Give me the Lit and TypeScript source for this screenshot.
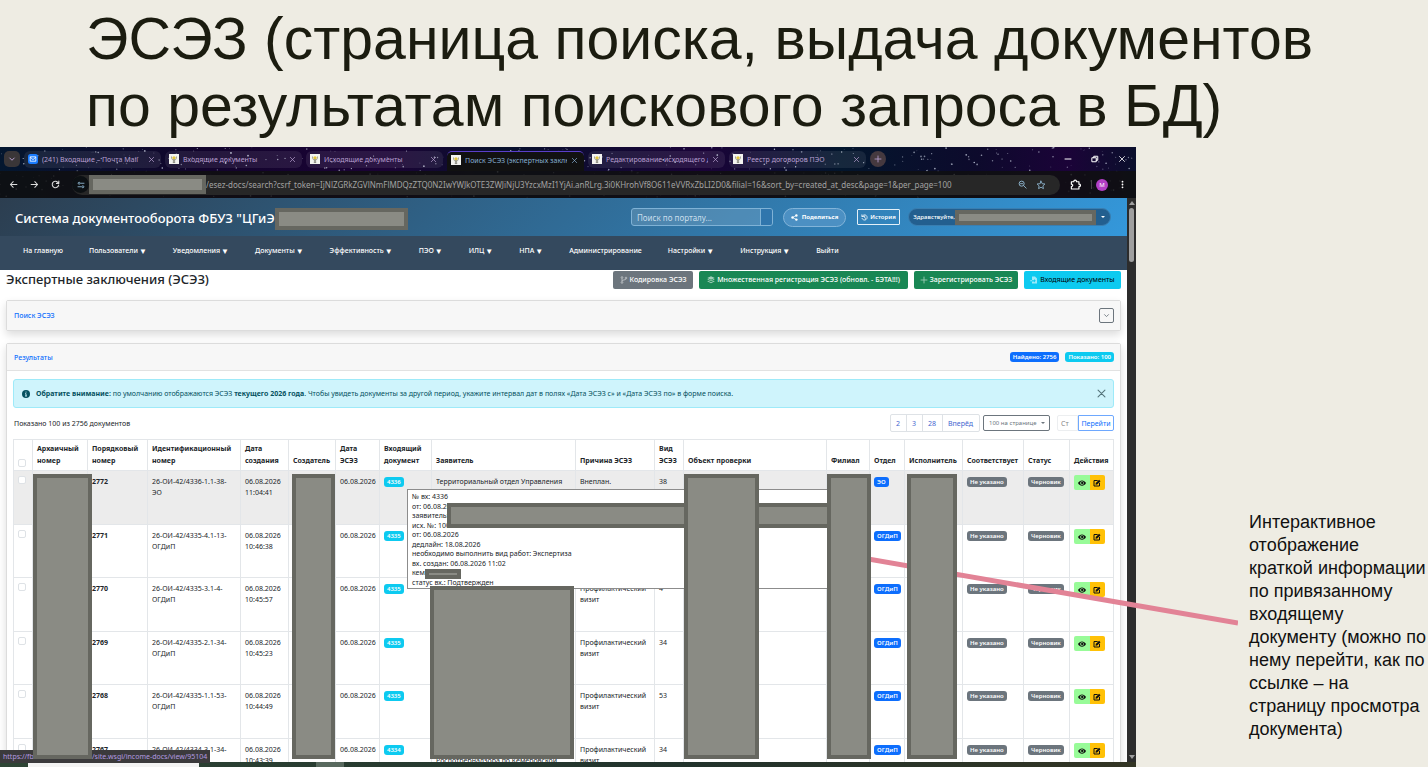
import { LitElement, html, svg, css, nothing, type TemplateResult } from "lit";
import { customElement } from "lit/decorators.js";

const icon = (size: number, body: TemplateResult, box = 16) =>
  html`<svg class="icon" width=${size} height=${size} viewBox="0 0 ${box} ${box}" aria-hidden="true">${body}</svg>`;

const line = (d: string, w = 1.6) =>
  svg`<path d=${d} fill="none" stroke="currentColor" stroke-width=${w} stroke-linecap="round" stroke-linejoin="round"/>`;

const icons = {
  chevron: svg`${line("M3.5 6l4.5 4.5L12.5 6", 2)}`,
  close: svg`${line("M3 3l10 10M13 3L3 13", 1.6)}`,
  plus: svg`${line("M8 2v12M2 8h12", 1.7)}`,
  minus: svg`${line("M2 8h12", 2)}`,
  restore: svg`${line("M2.5 5.5h8v8h-8zM5.5 5.5v-3h8v8h-3", 2)}`,
  back: svg`${line("M14 8H2.500M7.500 3L2.500 8l5 5", 1.8)}`,
  forward: svg`${line("M2 8h11.500M8.500 3l5 5-5 5", 1.8)}`,
  reload: svg`${line("M13.500 9A5.700 5.700 0 1 1 12 4L13.800 6M13.900 1.800V6H9.700", 1.9)}`,
  tune: svg`${line("M8 4.500h6M2 11.500h6", 1.8)}<circle cx="4.300" cy="4.500" r="2" fill="none" stroke="currentColor" stroke-width="1.800"/><circle cx="11.700" cy="11.500" r="2" fill="none" stroke="currentColor" stroke-width="1.800"/>`,
  zoomOut: svg`<circle cx="6.500" cy="6.500" r="4.500" fill="none" stroke="currentColor" stroke-width="1.700"/>${line("M10 10l4.500 4.500M4.500 6.500h4", 1.6)}`,
  star: svg`${line("M8 1.800l1.900 4.100 4.400.500-3.300 3 .900 4.400L8 11.600l-3.900 2.200.900-4.400-3.300-3 4.400-.500z", 1.4)}`,
  puzzle: svg`${line("M2 4h3.500c0-3 4-3 4 0H13v3.500c3 0 3 3.500 0 3.500v3.500H2V11c2.500 0 2.500-3.500 0-3.500z", 1.7)}`,
  dots: svg`<g fill="currentColor"><circle cx="8" cy="3" r="1.600"/><circle cx="8" cy="8" r="1.600"/><circle cx="8" cy="13" r="1.600"/></g>`,
  mail: svg`<rect width="16" height="16" rx="4" fill="#1a7cff"/><path d="M3.500 4.500h9v7h-9zM3.500 5l4.500 4 4.500-4" fill="none" stroke="#fff" stroke-width="1.300"/>`,
  emblem: svg`<rect width="16" height="16" fill="#f4f4f0"/><path d="M4 4c0 5 2 6 4 6s4-1 4-6" fill="none" stroke="#8c8c80" stroke-width="1.300"/><circle cx="8" cy="6" r="2.600" fill="#e4c63d"/><path d="M8 8v6.500M6 13h4" stroke="#77776c" stroke-width="1.500"/>`,
  share: svg`<g fill="currentColor"><circle cx="12.300" cy="3.200" r="2.800"/><circle cx="12.300" cy="12.800" r="2.800"/><circle cx="3.500" cy="8" r="2.800"/></g>${line("M12.300 3.200L3.500 8l8.800 4.800", 1.6)}`,
  history: svg`${line("M2.600 5.200a6 6 0 1 1-.2 5M2 1.800v3.900h3.900M8.300 4.800v3.600l2.300 1.500", 1.8)}`,
  branch: svg`<g fill="none" stroke="currentColor" stroke-width="1.600"><circle cx="4" cy="3" r="1.700"/><circle cx="4" cy="13" r="1.700"/><circle cx="12" cy="4" r="1.700"/><path d="M4 4.700v6.600M12 5.700c0 3-8 1.500-8 4.300"/></g>`,
  layers: svg`<g fill="currentColor"><path d="M8 0.500l7.500 3.500L8 7.500.500 4z"/><path d="M.5 7l1.800-.8L8 8.900l5.700-2.700 1.800.8L8 10.500z"/><path d="M.5 10.500l1.800-.8L8 12.400l5.700-2.700 1.800.8L8 14.500z"/></g>`,
  inbox: svg`<path d="M4 1h6l4 4v10H4v-4h4v2l3.500-3.500L8 6v2.500H4z" fill="currentColor"/><path d="M0.500 8.500H4v1.800H.500z" fill="currentColor"/>`,
  info: svg`<circle cx="8" cy="8" r="8" fill="currentColor"/><path d="M8 3.200v2M6.300 7.300H8v4.500M6 12h4" stroke="#cff4fc" stroke-width="1.800" fill="none"/>`,
  eye: svg`<path d="M0 8c3.500-7 12.500-7 16 0-3.500 7-12.500 7-16 0z" fill="currentColor"/><circle cx="8" cy="8" r="3.700" fill="#98fb98"/><circle cx="8.400" cy="8" r="2.300" fill="currentColor"/>`,
  edit: svg`${line("M8.500 3H2v11h11V8.500", 2)}<path d="M5.500 8.200L12.200 1.500l2.800 2.800-6.700 6.700-3.200.4z" fill="currentColor"/>`,
};

interface Tab { title: string; mark: "mail" | "emblem"; active?: boolean }
const tabs: Tab[] = [
  { title: "(241) Входящие – Почта Mail", mark: "mail" },
  { title: "Входящие документы", mark: "emblem" },
  { title: "Исходящие документы", mark: "emblem" },
  { title: "Поиск ЭСЭЗ (экспертных заключений)", mark: "emblem", active: true },
  { title: "Редактирование исходящего документа", mark: "emblem" },
  { title: "Реестр договоров ПЭО", mark: "emblem" },
];

const address =
  "/esez-docs/search?csrf_token=IjNlZGRkZGVlNmFlMDQzZTQ0N2IwYWJkOTE3ZWJiNjU3YzcxMzI1YjAi.anRLrg.3i0KHrohVf8O611eVVRxZbLI2D0&filial=16&sort_by=created_at_desc&page=1&per_page=100";

interface Entry { label: string; sub: boolean }
const menu: Entry[] = [
  { label: "На главную", sub: false }, { label: "Пользователи", sub: true }, { label: "Уведомления", sub: true },
  { label: "Документы", sub: true }, { label: "Эффективность", sub: true }, { label: "ПЭО", sub: true },
  { label: "ИЛЦ", sub: true }, { label: "НПА", sub: true }, { label: "Администрирование", sub: false },
  { label: "Настройки", sub: true }, { label: "Инструкция", sub: true }, { label: "Выйти", sub: false },
];

const columns: [string, string][] = [
  ["Архаичный номер", "w-arch"], ["Порядковый номер", "w-ord"], ["Идентификационный номер", "w-id"],
  ["Дата создания", "w-date"], ["Создатель", "w-creator"], ["Дата ЭСЭЗ", "w-day"], ["Входящий документ", "w-inc"],
  ["Заявитель", "w-appl"], ["Причина ЭСЭЗ", "w-reason"], ["Вид ЭСЭЗ", "w-kind"], ["Объект проверки", "w-object"],
  ["Филиал", "w-filial"], ["Отдел", "w-dept"], ["Исполнитель", "w-exec"], ["Соответствует", "w-fit"],
  ["Статус", "w-state"], ["Действия", "w-act"],
];

interface Row { n: string; id: string; time: string; inc: string; reason: string; kind: string; dept: string }
const visit = "Профилактический визит";
const rows: Row[] = [
  { n: "2772", id: "26-ОИ-42/4336-1.1-38-ЭО", time: "11:04:41", inc: "4336", reason: "Внеплан.", kind: "38", dept: "ЭО" },
  { n: "2771", id: "26-ОИ-42/4335-4.1-13-ОГДиП", time: "10:46:38", inc: "4335", reason: visit, kind: "13", dept: "ОГДиП" },
  { n: "2770", id: "26-ОИ-42/4335-3.1-4-ОГДиП", time: "10:45:57", inc: "4335", reason: visit, kind: "4", dept: "ОГДиП" },
  { n: "2769", id: "26-ОИ-42/4335-2.1-34-ОГДиП", time: "10:45:23", inc: "4335", reason: visit, kind: "34", dept: "ОГДиП" },
  { n: "2768", id: "26-ОИ-42/4335-1.1-53-ОГДиП", time: "10:44:49", inc: "4335", reason: visit, kind: "53", dept: "ОГДиП" },
  { n: "2767", id: "26-ОИ-42/4334-3.1-34-ОГДиП", time: "10:43:39", inc: "4334", reason: visit, kind: "34", dept: "ОГДиП" },
];

const hint = [
  "№ вх: 4336", "от: 06.08.2026", "заявитель:", "исх. №: 1001", "от: 06.08.2026", "дедлайн: 18.08.2026",
  "необходимо выполнить вид работ: Экспертиза", "вх. создан: 06.08.2026 11:02", "кем:", "статус вх.: Подтвержден",
];

// Night-sky theme of the browser frame: a fixed pseudo-random star field.
const stars = (() => {
  let s = 7;
  const next = () => (s = (s * 16807) % 2147483647) / 2147483647;
  return Array.from({ length: 520 }, () => ({ x: next() * 1136, y: next() * 51, r: 0.3 + next() * 0.6, o: 0.3 + next() * 0.6 }));
})();

@customElement("app-root")
export class AppRoot extends LitElement {
  static styles = css`
    :host { display: block; height: 100vh; overflow: hidden; background: #eeece3; color: #212529;
      font-family: "Noto Sans", "Open Sans", sans-serif; font-size: 7px; line-height: 11px; }
    * { box-sizing: border-box; }
    button, input, select { font: inherit; color: inherit; margin: 0; padding: 0; border: 0; background: none; }
    a { text-decoration: none; color: inherit; }
    .icon { display: block; flex: none; }
    .slide { display: flex; flex-direction: column; height: 100%; }
    .title { margin: 0; padding: 6px 80px 7px 86px; font: 400 59px/67px "Liberation Sans", Arial, sans-serif; color: #1b1c10; }
    .title span, .note span { display: block; white-space: nowrap; }
    .body { position: relative; flex: 1; min-height: 0; display: flex; }
    .shot { flex: 1; min-width: 0; display: flex; flex-direction: column; overflow: hidden; background: #fff; }
    .note { flex: none; width: 292px; margin: 0; padding: 364px 0 0 113px; font: 400 18px/23px "Liberation Sans", Arial, sans-serif; color: #111; }
    .pointer { position: absolute; z-index: 2; right: 190px; top: 408px; }

    .mask { position: absolute; z-index: 3; background: #8a8b84; border: 4px solid #666760; }
    .m-arch { left: 0; top: 3px; width: 59px; height: 285px; }
    .m-creator { left: 3px; top: 3px; width: 43px; height: 285px; }
    .m-appl { left: -2px; top: 115px; width: 144px; height: 173px; }
    .m-object { left: 0; top: 3px; width: 75px; height: 285px; }
    .m-filial { left: 0; top: 3px; width: 44px; height: 285px; }
    .m-exec { left: 2px; top: 3px; width: 50px; height: 285px; }
    .m-hint { left: 39px; top: 13px; width: 386px; height: 25px; }
    .m-who { left: 17px; top: 79px; width: 36px; height: 10px; }
    .m-static { position: static; flex: none; }
    .m-host { width: 117px; height: 19px; }
    .m-org { width: 133px; height: 22px; }
    .m-user { width: 141px; height: 15px; }

    .frame { position: relative; flex: none; color: #b79fd0;
      background: linear-gradient(90deg, #04172f 0, #12042c 18%, #1b0336 34%, #08112c 44%, #1a0338 62%, #03162d 74%, #0d0a2c 86%, #1b0338 94%, #0a0f2c 100%); }
    .sky { position: absolute; left: 0; top: 0; width: 100%; height: 100%; }
    .tabs { position: relative; display: flex; align-items: center; gap: 4px; height: 24px; padding: 0 10px 0 4px; }
    .tabs .drop { width: 16px; height: 16px; border-radius: 5px; background: #3a3638; display: grid; place-items: center; }
    .tab { flex: 0 1 137px; min-width: 0; height: 17px; padding: 0 6px 0 4px; display: flex; align-items: center; gap: 4px; border-radius: 6px; background: rgb(255 255 255 / 8%); }
    .tab.active { height: 20px; margin-top: 4px; padding-bottom: 3px; background: #111; border-top: 1px solid #5a3ec8; border-radius: 5px 5px 0 0; color: #85aed0; }
    .tab span { flex: 1; overflow: hidden; white-space: nowrap; }
    .new { width: 16px; height: 16px; border-radius: 8px; background: #45393f; display: grid; place-items: center; }
    .controls { margin-left: auto; display: flex; gap: 19px; color: #fff; }
    .bar { position: relative; display: flex; align-items: center; height: 27px; padding: 0 9px 0 9px; background: rgb(15 15 15 / 84%); color: #8fb6cf; }
    .bar .nav { display: flex; gap: 12px; width: 63px; color: #ddd; }
    .omni { flex: 1; min-width: 0; height: 20px; border-radius: 10px; background: #272727; display: flex; align-items: center; padding-right: 14px; }
    .omni .tune { width: 17px; height: 17px; border-radius: 9px; background: #0c1013; display: grid; place-items: center; }
    .omni input { flex: 1; min-width: 0; height: 18px; color: #a2a2a2; font-size: 8px; }
    .omni .tail { display: flex; gap: 9px; }
    .exts { display: flex; align-items: center; gap: 10px; margin-left: 10px; color: #fff; }
    .exts i { width: 1px; height: 9px; margin-right: -6px; background: #444; }
    .avatar { width: 12px; height: 12px; border-radius: 6px; background: #b23fc4; color: #fff; font-size: 6px; line-height: 12px; text-align: center; }

    .view { flex: 1; min-height: 0; display: flex; }
    .page { flex: 1; min-width: 0; overflow: hidden; }
    .scroll { flex: none; width: 9px; background: #2c2c2c; padding: 3px 2px; display: flex; flex-direction: column; align-items: center; }
    .scroll b { width: 5px; height: 54px; margin: 3px 0 auto; border-radius: 3px; background: #9f9f9f; }
    .up, .down { border: 3px solid transparent; border-top-width: 0; border-bottom: 4px solid #9f9f9f; }
    .down { border-top: 4px solid #9f9f9f; border-bottom-width: 0; }

    .head { height: 38px; display: flex; align-items: center; padding: 0 16px 0 15px; background: linear-gradient(135deg, #2c3e50, #3498db); color: #fff; }
    .head > .mask { margin-top: 3px; }
    .head h1 { margin: 0; font-size: 13px; line-height: 18px; font-weight: 500; white-space: nowrap; padding-top: 2px; }
    .head .right { margin-left: auto; display: flex; align-items: center; }
    .search { display: flex; width: 142px; height: 18px; border: 1px solid #7fb2d6; border-radius: 3px; background: rgb(255 255 255 / 14%); overflow: hidden; }
    .search input { flex: 1; min-width: 0; padding: 0 5px; border-right: 1px solid #7fb2d6; font-size: 8px; }
    .search input::placeholder { color: #c9deec; opacity: 1; }
    .search button { width: 11px; background: #3076ad; }
    .share { margin-left: 10px; width: 63px; height: 19px; border-radius: 10px; border: 1px solid #82b4d9; background: #4c90c3; display: flex; align-items: center; justify-content: center; gap: 4px; font-size: 6px; font-weight: 700; }
    .hist { margin-left: 11px; width: 43px; height: 16px; border: 1px solid #e4f0f8; border-radius: 1px; display: flex; align-items: center; justify-content: center; gap: 2px; font-size: 6px; font-weight: 600; }
    .user { margin-left: 8px; height: 18px; width: 203px; border-radius: 9px; border: 1px solid #3a7eb0; background: #235f8f; display: flex; align-items: center; justify-content: flex-end; padding-right: 5px; font-size: 6px; font-weight: 500; }
    .caret { margin-left: 5px; border: 2px solid transparent; border-top-color: currentColor; border-bottom: 0; }
    .menu { height: 34px; display: flex; gap: 26px; padding: 8px 23px 0; background: #34495e; color: #fff; font-weight: 500; line-height: 13px; white-space: nowrap; }
    .menu a { display: flex; gap: 1px; }
    .menu i { font-style: normal; font-size: 8px; }

    .content { padding: 0 6px; }
    .top { display: flex; align-items: center; gap: 6px; height: 19px; }
    .top h2 { margin: 0 auto 0 0; font-size: 13px; line-height: 19px; font-weight: 500; white-space: nowrap; }
    .btn { height: 18px; display: flex; align-items: center; justify-content: center; gap: 2px; border-radius: 2px; color: #fff; font-weight: 500; white-space: nowrap; }
    .btn .icon { opacity: 0.6; }
    .grey { background: #6c757d; width: 80px; }
    .green { background: #198754; width: 209px; }
    .green.small { width: 104px; }
    .cyan { background: #0dcaf0; color: #000; width: 97px; font-weight: 400; }
    .cyan .icon { color: #fff; }
    .card { border: 1px solid #dcdcdc; border-radius: 2px; box-shadow: 0 4px 8px rgb(0 0 0 / 14%); background: #fff; }
    .card + .card { margin-top: 12px; }
    .card header { display: flex; align-items: center; gap: 6px; padding: 0 6px 0 7px; background: #f7f7f7; color: #0d6efd; font-weight: 500; }
    .card header a { margin-right: auto; }
    .find { margin-top: 11px; }
    .find header { height: 29px; }
    .find button { width: 15px; height: 15px; border: 1px solid #6c757d; border-radius: 2px; color: #6c757d; display: grid; place-items: center; }
    .res header { height: 27px; border-bottom: 1px solid #e2e2e2; }
    .pill { display: inline-block; height: 10px; padding: 0 3px; border-radius: 3px; color: #fff; font-size: 6px; line-height: 10px; font-weight: 600; white-space: nowrap; }
    .blue { background: #0d6efd; }
    .aqua { background: #0dcaf0; }
    .dim { background: #6c757d; }
    .inner { padding: 8px 6px 0; }
    .alert { height: 29px; display: flex; align-items: center; padding: 0 6px 0 8px; border: 1px solid #9eeaf9; border-radius: 3px; background: #cff4fc; color: #055160; }
    .alert p { margin: 0 auto 0 6px; white-space: nowrap; }
    .alert button { color: #55757c; }
    .tools { display: flex; align-items: center; margin: 6px 0 7px; height: 18px; }
    .tools p { margin: 0 auto 0 1px; }
    .pages { display: flex; height: 18px; border: 1px solid #dee2e6; border-radius: 2px; color: #3f66d0; }
    .pages a { padding: 0 6px 0 5px; line-height: 17px; border-right: 1px solid #dee2e6; }
    .pages a:last-child { border-right: 0; }
    .per { position: relative; margin-left: 3px; display: flex; }
    .per select { appearance: none; width: 67px; height: 16px; padding: 0 5px; border: 1px solid #6c757d; border-radius: 2px; color: #6c757d; font-size: 6px; }
    .per i { position: absolute; right: 5px; top: 7px; border: 2px solid transparent; border-top-color: #6c757d; border-bottom: 0; }
    .jump { margin-left: 7px; display: flex; height: 16px; }
    .jump input { width: 21px; padding: 0 3px; border: 1px solid #eceef0; border-radius: 2px 0 0 2px; }
    .jump input::placeholder { color: #888; opacity: 1; }
    .jump button { width: 36px; border: 1px solid #6ea8fe; border-radius: 0 2px 2px 0; color: #0d6efd; }

    table { width: 100%; table-layout: fixed; border-collapse: collapse; }
    th, td { position: relative; border: 1px solid #e3e6e9; padding: 5px 4px 0; text-align: left; vertical-align: top; }
    th { height: 31px; padding: 0 4px 3px; vertical-align: bottom; line-height: 12px; font-weight: 700; }
    td:last-child { padding-top: 4px; }
    tbody tr { height: 54px; }
    tbody tr:nth-child(even) { height: 53px; }
    tbody tr:first-child { background: #ececec; }
    td .clip { display: block; max-height: 44px; overflow: hidden; }
    td .pill { margin-top: 1px; }
    input[type="checkbox"] { appearance: none; display: block; width: 8px; height: 8px; border: 1px solid #dee2e6; border-radius: 2px; background: #fff; }
    .w-check { width: 19px; } .w-arch { width: 55px; } .w-ord { width: 60px; } .w-id { width: 93px; }
    .w-date { width: 48px; } .w-creator { width: 47px; } .w-day { width: 44px; } .w-inc { width: 52px; }
    .w-appl { width: 144px; } .w-reason { width: 79px; } .w-kind { width: 29px; } .w-filial { width: 43px; }
    .w-dept { width: 35px; } .w-exec { width: 58px; } .w-fit { width: 61px; } .w-state { width: 46px; } .w-act { width: 44px; }
    .acts { display: flex; width: 31px; border-radius: 2px; overflow: hidden; color: #111; }
    .acts button { flex: 1; height: 15px; display: grid; place-items: center; background: #98fb98; }
    .acts button + button { background: #ffc107; }
    .hint { position: absolute; z-index: 2; left: 27px; top: 18px; width: 430px; height: 100px; margin: 0; padding: 2px 4px; list-style: none; background: #fff; border: 1px solid #8c8c8c; white-space: nowrap; }
    .hint li { line-height: 10px; }
    .hint li:nth-child(even) { line-height: 9px; }
    .status { position: absolute; z-index: 2; left: 0; bottom: 4px; height: 13px; padding: 0 3px; background: #3b3a3c; color: #b49ae0; line-height: 13px; white-space: nowrap; display: flex; }
    .status span { flex: none; width: 89px; }
    .task { position: relative; z-index: 2; flex: none; height: 5px; padding-left: 28px; display: flex; gap: 117px; background: linear-gradient(90deg, #2e4535, #22332c 60%, #333524); }
    .task i { width: 171px; background: #f3f3f3; }
    .task b { width: 28px; background: #58695e; }
  `;

  private mask(kind: string) {
    return html`<span class="mask ${kind}"></span>`;
  }

  private browser() {
    return html`<div class="frame">
      <svg class="sky" viewBox="0 0 1136 51" preserveAspectRatio="xMidYMid slice" aria-hidden="true">
        ${stars.map((s) => svg`<circle cx=${s.x} cy=${s.y} r=${s.r} fill="#cfd6e6" opacity=${s.o}/>`)}
      </svg>
      <div class="tabs">
        <button class="drop" aria-label="Список вкладок">${icon(8, icons.chevron)}</button>
        ${tabs.map((t) => html`<div class="tab ${t.active ? "active" : ""}">
          ${icon(10, icons[t.mark])}<span>${t.title}</span>
          <button aria-label="Закрыть вкладку">${icon(7, icons.close)}</button>
        </div>`)}
        <button class="new" aria-label="Новая вкладка">${icon(8, icons.plus)}</button>
        <div class="controls">
          <button aria-label="Свернуть">${icon(8, icons.minus)}</button>
          <button aria-label="Развернуть">${icon(8, icons.restore)}</button>
          <button aria-label="Закрыть">${icon(8, icons.close)}</button>
        </div>
      </div>
      <div class="bar">
        <div class="nav">
          <button aria-label="Назад">${icon(9, icons.back)}</button>
          <button aria-label="Вперёд">${icon(9, icons.forward)}</button>
          <button aria-label="Обновить">${icon(9, icons.reload)}</button>
        </div>
        <div class="omni">
          <button class="tune" aria-label="Сведения о сайте">${icon(8, icons.tune)}</button>
          ${this.mask("m-static m-host")}
          <input type="text" aria-label="Адрес" .value=${address} />
          <div class="tail">
            <button aria-label="Масштаб">${icon(9, icons.zoomOut)}</button>
            <button aria-label="В закладки">${icon(10, icons.star)}</button>
          </div>
        </div>
        <div class="exts">
          <button aria-label="Расширения">${icon(11, icons.puzzle)}</button><i></i>
          <button class="avatar">M</button>
          <button aria-label="Меню">${icon(9, icons.dots)}</button>
        </div>
      </div>
    </div>`;
  }

  private header() {
    return html`<div class="head">
        <h1>Система документооборота ФБУЗ "ЦГиЭ</h1>${this.mask("m-static m-org")}
        <div class="right">
          <div class="search"><input type="search" placeholder="Поиск по порталу..." aria-label="Поиск по порталу" /><button aria-label="Найти"></button></div>
          <button class="share">${icon(7, icons.share)}Поделиться</button>
          <button class="hist">${icon(7, icons.history)}История</button>
          <button class="user">Здравствуйте,${this.mask("m-static m-user")}<i class="caret"></i></button>
        </div>
      </div>
      <nav class="menu">${menu.map((m) => html`<a href="#">${m.label}${m.sub ? html`<i>▼</i>` : nothing}</a>`)}</nav>`;
  }

  private row(r: Row, first: boolean) {
    const m = (k: string) => (first ? this.mask(k) : nothing);
    return html`<tr>
      <td><input type="checkbox" aria-label="Выбрать ${r.n}" /></td>
      <td>${m("m-arch")}</td>
      <td><b>${r.n}</b></td>
      <td>${r.id}</td>
      <td>06.08.2026 ${r.time}</td>
      <td>${m("m-creator")}</td>
      <td>06.08.2026</td>
      <td><a class="pill aqua" href="#">${r.inc}</a>
        ${first ? html`<ul class="hint">${hint.map((h) => html`<li>${h}</li>`)}${this.mask("m-hint")}${this.mask("m-who")}</ul>` : nothing}</td>
      <td><span class="clip">Территориальный отдел Управления Роспотребнадзора по Кемеровской области</span>${m("m-appl")}</td>
      <td>${r.reason}</td>
      <td>${r.kind}</td>
      <td>${m("m-object")}</td>
      <td>${m("m-filial")}</td>
      <td><span class="pill blue">${r.dept}</span></td>
      <td>${m("m-exec")}</td>
      <td><span class="pill dim">Не указано</span></td>
      <td><span class="pill dim">Черновик</span></td>
      <td><div class="acts">
        <button aria-label="Просмотр">${icon(8, icons.eye)}</button>
        <button aria-label="Изменить">${icon(8, icons.edit)}</button>
      </div></td>
    </tr>`;
  }

  private results() {
    return html`<section class="card res">
      <header><a href="#">Результаты</a><span class="pill blue">Найдено: 2756</span><span class="pill aqua">Показано: 100</span></header>
      <div class="inner">
        <div class="alert">${icon(8, icons.info)}
          <p><b>Обратите внимание:</b> по умолчанию отображаются ЭСЭЗ <b>текущего 2026 года</b>. Чтобы увидеть документы за другой период, укажите интервал дат в полях «Дата ЭСЭЗ с» и «Дата ЭСЭЗ по» в форме поиска.</p>
          <button aria-label="Закрыть">${icon(11, icons.close)}</button>
        </div>
        <div class="tools">
          <p>Показано 100 из 2756 документов</p>
          <nav class="pages"><a href="#">2</a><a href="#">3</a><a href="#">28</a><a href="#">Вперёд</a></nav>
          <div class="per"><select aria-label="Записей на странице"><option>100 на странице</option></select><i></i></div>
          <div class="jump"><input placeholder="Ст" aria-label="Страница" /><button>Перейти</button></div>
        </div>
        <table>
          <colgroup><col class="w-check" />${columns.map(([, w]) => html`<col class=${w} />`)}</colgroup>
          <thead><tr><th><input type="checkbox" aria-label="Выбрать все" /></th>${columns.map(([t]) => html`<th>${t}</th>`)}</tr></thead>
          <tbody>${rows.map((r, i) => this.row(r, i === 0))}</tbody>
        </table>
      </div>
    </section>`;
  }

  render() {
    return html`<main class="slide">
      <h1 class="title"><span>ЭСЭЗ (страница поиска, выдача документов</span><span>по результатам поискового запроса в БД)</span></h1>
      <div class="body">
        <div class="shot">
          ${this.browser()}
          <div class="view">
            <div class="page">
              ${this.header()}
              <div class="content">
                <div class="top">
                  <h2>Экспертные заключения (ЭСЭЗ)</h2>
                  <button class="btn grey">${icon(8, icons.branch)}Кодировка ЭСЭЗ</button>
                  <button class="btn green">${icon(8, icons.layers)}Множественная регистрация ЭСЭЗ (обновл. - БЭТА!!!)</button>
                  <button class="btn green small">${icon(8, icons.plus)}Зарегистрировать ЭСЭЗ</button>
                  <button class="btn cyan">${icon(8, icons.inbox)}Входящие документы</button>
                </div>
                <section class="card find"><header><a href="#">Поиск ЭСЭЗ</a><button aria-label="Развернуть">${icon(7, icons.chevron)}</button></header></section>
                ${this.results()}
              </div>
            </div>
            <div class="scroll"><i class="up"></i><b></b><i class="down"></i></div>
          </div>
          <div class="task"><i></i><b></b></div>
          <div class="status"><span>https://fb</span>/site.wsgi/income-docs/view/95104</div>
        </div>
        <p class="note">
          <span>Интерактивное</span><span>отображение</span><span>краткой информации</span><span>по привязанному</span><span>входящему</span>
          <span>документу (можно по</span><span>нему перейти, как по</span><span>ссылке – на</span><span>страницу просмотра</span><span>документа)</span>
        </p>
        <svg class="pointer" width="370" height="72" viewBox="0 0 370 72" aria-hidden="true"><path d="M0 4L370 68" stroke="#e28396" stroke-width="5" /></svg>
      </div>
    </main>`;
  }
}
